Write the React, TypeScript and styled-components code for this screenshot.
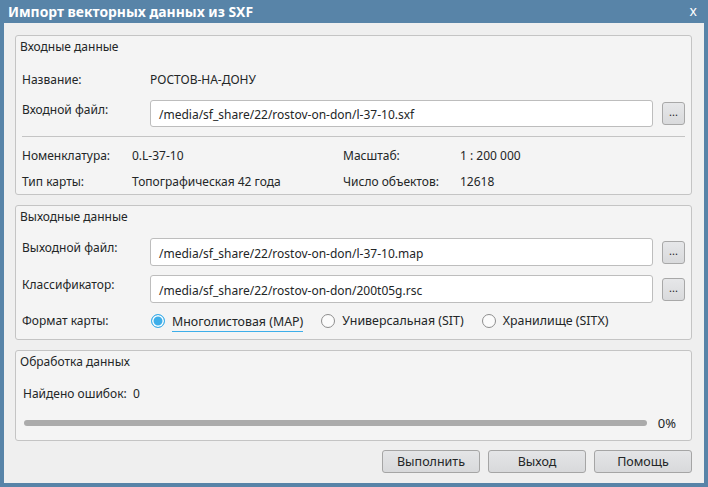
import React from 'react';
import styled, { createGlobalStyle } from 'styled-components';

const GlobalStyle = createGlobalStyle`
    html, body {
        margin: 0;
        padding: 0;
        background: #5884a8;
    }
    body {
        font-family: "Noto Sans", "DejaVu Sans", sans-serif;
        font-size: 12px;
        color: #232627;
    }
`;

const Window = styled.div`
    width: 708px;
    height: 487px;
    background: #5884a8;
    display: flex;
    flex-direction: column;
    box-sizing: border-box;
`;

const TitleBar = styled.div`
    height: 23px;
    display: flex;
    align-items: center;
    justify-content: space-between;
    padding: 0 11px 0 8px;
    color: #ffffff;
    font-weight: bold;
    font-size: 13.9px;
`;

const CloseGlyph = styled.span`
    font-weight: normal;
    font-size: 14px;
    line-height: 1;
    margin-top: -1px;
`;

const Client = styled.div`
    flex: 1;
    margin: 0 4px 4px;
    background: #efefef;
    padding: 12px 12px 10px 11px;
    display: flex;
    flex-direction: column;
    gap: 10px;
`;

const GroupBox = styled.section<{ h: number }>`
    height: ${({ h }) => h}px;
    box-sizing: border-box;
    border: 1px solid #c4c4c4;
    border-radius: 3px;
    background: #f4f4f4;
    padding: 0 6px;
    display: flex;
    flex-direction: column;
`;

const Legend = styled.div`
    height: 19px;
    line-height: 19px;
    margin-left: -6px;
    padding-left: 4px;
    padding-top: 1px;
`;

const FormRow = styled.div<{ top: number; h: number }>`
    margin-top: ${({ top }) => top}px;
    height: ${({ h }) => h}px;
    display: grid;
    grid-template-columns: 128px 1fr;
    align-items: center;
`;

const FieldLabel = styled.div<{ lift?: boolean }>`
    line-height: 18px;
    align-self: ${({ lift }) => (lift ? 'start' : 'center')};
    padding-top: ${({ lift }) => (lift ? '1px' : '0')};
`;

const FileRow = styled.div`
    display: flex;
    align-items: center;
    height: 100%;
`;

const PathInput = styled.div`
    flex: 1;
    height: 100%;
    box-sizing: border-box;
    background: #ffffff;
    border: 1px solid #bdbdbd;
    border-radius: 3px;
    padding: 2px 8px 0;
    display: flex;
    align-items: center;
`;

const BrowseButton = styled.button`
    width: 23px;
    height: 23px;
    margin-left: 9px;
    padding: 0 0 4px;
    box-sizing: border-box;
    border: 1px solid #a8a8a8;
    border-radius: 3px;
    background: linear-gradient(#e6e7e9, #d9dadc);
    font-family: inherit;
    font-size: 11px;
    color: #232627;
    line-height: 1;
`;

const Separator = styled.div`
    height: 1px;
    background: #c4c4c4;
    margin: 9px 0 0 0;
`;

const InfoGrid = styled.div`
    display: grid;
    grid-template-columns: 110px 211px 117px 1fr;
    grid-auto-rows: 26px;
    align-items: center;
    margin-top: 5px;
`;

const RadioGroup = styled.div`
    display: flex;
    align-items: center;
    gap: 17px;
`;

const RadioItem = styled.label`
    display: flex;
    align-items: center;
    gap: 7px;
`;

const RadioMark = styled.span<{ checked?: boolean }>`
    width: 14px;
    height: 14px;
    box-sizing: border-box;
    border-radius: 50%;
    border: 1px solid ${({ checked }) => (checked ? '#3daee9' : '#8e8e8e')};
    background: ${({ checked }) => (checked ? '#3daee9' : '#fbfbfb')};
    box-shadow: ${({ checked }) => (checked ? 'inset 0 0 0 1.5px #ffffff' : 'none')};
    margin-left: 1px;
`;

const RadioText = styled.span<{ focused?: boolean }>`
    font-size: 12.4px;
    padding-top: ${({ focused }) => (focused ? '3px' : '0')};
    border-bottom: ${({ focused }) => (focused ? '1px solid #3daee9' : 'none')};
    line-height: 18px;
`;

const PlainRow = styled.div<{ top: number }>`
    margin-top: ${({ top }) => top}px;
    height: 20px;
    display: flex;
    align-items: center;
    padding-left: 1px;
`;

const ProgressRow = styled.div<{ top: number }>`
    margin-top: ${({ top }) => top}px;
    height: 20px;
    display: flex;
    align-items: center;
    padding: 0 9px 0 2px;
    gap: 11px;
`;

const ProgressTrack = styled.div`
    flex: 1;
    height: 6px;
    border-radius: 3px;
    background: #ababab;
`;

const Percent = styled.span`
    font-size: 13px;
`;

const Footer = styled.div`
    display: flex;
    justify-content: flex-end;
    gap: 8px;
    margin-top: -1px;
`;

const ActionButton = styled.button`
    width: 98px;
    height: 23px;
    box-sizing: border-box;
    border: 1px solid #a5a5a5;
    border-radius: 3px;
    background: linear-gradient(#e4e5e7, #d8d9db);
    font-family: "Noto Sans", "DejaVu Sans", sans-serif;
    font-size: 12.5px;
    color: #232627;
    padding: 0;
`;

const formats = [
    { label: 'Многолистовая (MAP)', checked: true },
    { label: 'Универсальная (SIT)', checked: false },
    { label: 'Хранилище (SITX)', checked: false },
];

const FileField = ({ value }: { value: string }) => (
    <FileRow>
        <PathInput>{value}</PathInput>
        <BrowseButton>...</BrowseButton>
    </FileRow>
);

export default function App() {
    return (
        <>
            <GlobalStyle />
            <Window>
                <TitleBar>
                    <span>Импорт векторных данных из SXF</span>
                    <CloseGlyph>x</CloseGlyph>
                </TitleBar>
                <Client>
                    <GroupBox h={160}>
                        <Legend>Входные данные</Legend>
                        <FormRow top={12} h={24}>
                            <FieldLabel>Название:</FieldLabel>
                            <div>РОСТОВ-НА-ДОНУ</div>
                        </FormRow>
                        <FormRow top={8} h={28}>
                            <FieldLabel lift>Входной файл:</FieldLabel>
                            <FileField value="/media/sf_share/22/rostov-on-don/l-37-10.sxf" />
                        </FormRow>
                        <Separator />
                        <InfoGrid>
                            <div>Номенклатура:</div>
                            <div>0.L-37-10</div>
                            <div>Масштаб:</div>
                            <div>1 : 200 000</div>
                            <div>Тип карты:</div>
                            <div>Топографическая 42 года</div>
                            <div>Число объектов:</div>
                            <div>12618</div>
                        </InfoGrid>
                    </GroupBox>
                    <GroupBox h={135}>
                        <Legend>Выходные данные</Legend>
                        <FormRow top={12} h={28}>
                            <FieldLabel lift>Выходной файл:</FieldLabel>
                            <FileField value="/media/sf_share/22/rostov-on-don/l-37-10.map" />
                        </FormRow>
                        <FormRow top={9} h={28}>
                            <FieldLabel lift>Классификатор:</FieldLabel>
                            <FileField value="/media/sf_share/22/rostov-on-don/200t05g.rsc" />
                        </FormRow>
                        <FormRow top={7} h={22}>
                            <FieldLabel>Формат карты:</FieldLabel>
                            <RadioGroup>
                                {formats.map((f) => (
                                    <RadioItem key={f.label}>
                                        <RadioMark checked={f.checked} />
                                        <RadioText focused={f.checked}>{f.label}</RadioText>
                                    </RadioItem>
                                ))}
                            </RadioGroup>
                        </FormRow>
                    </GroupBox>
                    <GroupBox h={91}>
                        <Legend>Обработка данных</Legend>
                        <PlainRow top={12}>Найдено ошибок:&nbsp; 0</PlainRow>
                        <ProgressRow top={10}>
                            <ProgressTrack />
                            <Percent>0%</Percent>
                        </ProgressRow>
                    </GroupBox>
                    <Footer>
                        <ActionButton>Выполнить</ActionButton>
                        <ActionButton>Выход</ActionButton>
                        <ActionButton>Помощь</ActionButton>
                    </Footer>
                </Client>
            </Window>
        </>
    );
}
